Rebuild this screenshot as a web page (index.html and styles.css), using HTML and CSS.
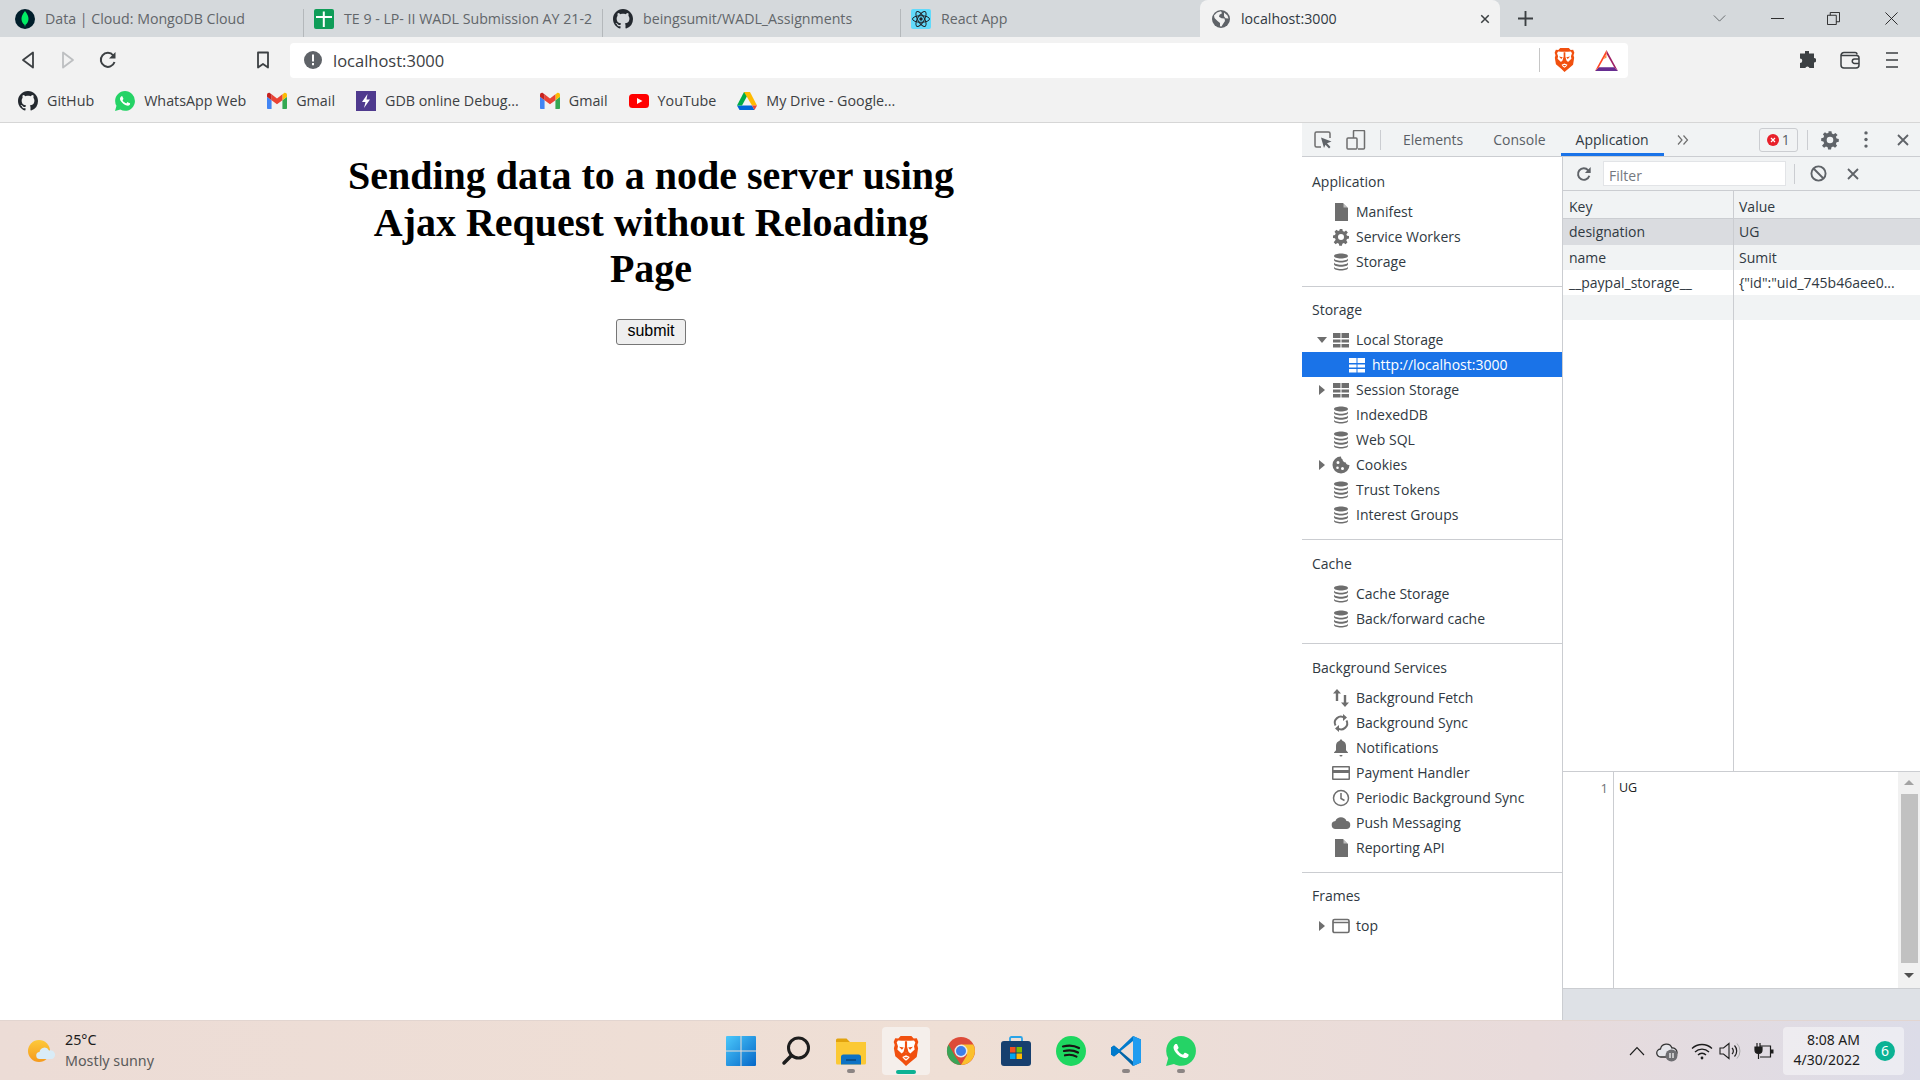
FILE: index.html
```html
<!DOCTYPE html>
<html lang="en">
<head>
  <meta charset="UTF-8">
  <title>localhost:3000</title>
  <link rel="stylesheet" href="styles.css">
</head>
<body>
  <svg class="defs" width="0" height="0">
    <symbol id="i-github" viewBox="0 0 16 16"><path fill="#24292f" d="M8 0C3.58 0 0 3.58 0 8c0 3.54 2.29 6.53 5.47 7.59.4.07.55-.17.55-.38 0-.19-.01-.82-.01-1.49-2.01.37-2.53-.49-2.69-.94-.09-.23-.48-.94-.82-1.13-.28-.15-.68-.52-.01-.53.63-.01 1.08.58 1.23.82.72 1.21 1.87.87 2.33.66.07-.52.28-.87.51-1.07-1.78-.2-3.64-.89-3.64-3.95 0-.87.31-1.59.82-2.15-.08-.2-.36-1.02.08-2.12 0 0 .67-.21 2.2.82.64-.18 1.32-.27 2-.27.68 0 1.36.09 2 .27 1.53-1.04 2.2-.82 2.2-.82.44 1.1.16 1.92.08 2.12.51.56.82 1.27.82 2.15 0 3.07-1.87 3.75-3.65 3.95.29.25.54.73.54 1.48 0 1.07-.01 1.93-.01 2.2 0 .21.15.46.55.38A8.013 8.013 0 0016 8c0-4.42-3.58-8-8-8z"/></symbol>
    <symbol id="i-whatsapp" viewBox="0 0 24 24"><path fill="#25d366" d="M.06 24l1.69-6.16A11.86 11.86 0 0 1 .16 11.9C.16 5.34 5.5 0 12.05 0c3.18 0 6.17 1.24 8.41 3.49a11.82 11.82 0 0 1 3.48 8.41c0 6.56-5.34 11.89-11.89 11.89-2 0-3.95-.5-5.68-1.45z"/><path fill="#fff" d="M17.47 14.38c-.3-.15-1.76-.87-2.03-.97-.27-.1-.47-.15-.67.15-.2.3-.77.97-.94 1.16-.17.2-.35.22-.64.08-.3-.15-1.26-.46-2.39-1.48-.88-.79-1.48-1.76-1.65-2.06-.17-.3-.02-.46.13-.61.13-.13.3-.35.45-.52.15-.17.2-.3.3-.5.1-.2.05-.37-.03-.52-.07-.15-.67-1.61-.92-2.21-.24-.58-.49-.5-.67-.51h-.57c-.2 0-.52.07-.79.37-.27.3-1.04 1.02-1.04 2.48 0 1.46 1.07 2.88 1.21 3.07.15.2 2.1 3.2 5.08 4.49.71.31 1.26.49 1.69.63.71.23 1.36.2 1.87.12.57-.09 1.76-.72 2.01-1.41.25-.69.25-1.29.17-1.41-.07-.12-.27-.2-.57-.35z"/></symbol>
    <symbol id="i-gmail" viewBox="0 0 24 20"><path fill="#4285f4" d="M1 19.5h4.5V9L0 5v13c0 .8.5 1.5 1 1.5z"/><path fill="#34a853" d="M18.5 19.5H23c.6 0 1-.7 1-1.5V5l-5.5 4z"/><path fill="#fbbc04" d="M18.5 2v7L24 5V2.5C24 .6 21.8-.5 20.3.6z"/><path fill="#ea4335" d="M5.5 9V2L12 7l6.5-5v7L12 14z"/><path fill="#c5221f" d="M0 2.5V5l5.500 4V2L3.700.6C2.200-.5 0 .6 0 2.500z"/></symbol>
    <symbol id="i-brave" viewBox="0 0 24 28"><path fill="#f1500f" d="M7 0h10l2.2 2.3 2.9-.3 1.4 3.5-1 3 .8 3-1.300 8-6.500 5.500L12 28l-3.500-3.500L2 19l-1.300-7.500.8-3-1-3L1.900 2l2.900.3z"/><path fill="#fff" d="M8 4.500h8l3.500-.3 1.200 1.800-1.200 3.500.6 3-4 3.800-1.100-1-1.500-.8-1.500.8-1.500-.8-1.500.8-1.100 1-4-3.800.6-3L3.300 6l1.200-1.800zM8.500 19.500L12 18l3.500 1.500-1.500 2-2 1.500-2-1.500z"/><path fill="#f1500f" d="M5.500 10l4.500.8-1.800 2zM18.500 10l-4.500.8 1.800 2zM11 5v5l-1.500 5.500h5L13 10V5zM9.800 19.800h4.400L12 21.500z"/></symbol>
    <symbol id="i-db" viewBox="0 0 20 20"><path fill="#6e6e6e" d="M10 1.500c3.900 0 7 1.100 7 2.500s-3.100 2.500-7 2.500S3 5.400 3 4s3.100-2.500 7-2.500zM3 6.200c0 1.400 3.100 2.500 7 2.500s7-1.100 7-2.500v1.900c0 1.400-3.100 2.500-7 2.500s-7-1.100-7-2.500zM3 10.300c0 1.400 3.100 2.500 7 2.500s7-1.100 7-2.500v1.900c0 1.400-3.100 2.500-7 2.500s-7-1.100-7-2.500zM3 14.400c0 1.400 3.100 2.500 7 2.500s7-1.100 7-2.500V16c0 1.400-3.100 2.500-7 2.500S3 17.400 3 16z"/></symbol>
    <symbol id="i-grid" viewBox="0 0 20 20"><path fill="currentColor" d="M2 3h7.500v5H2zM10.500 3H18v5h-7.500zM2 9.500h7.500v3H2zM10.500 9.500H18v3h-7.500zM2 14h7.500v3.500H2zM10.500 14H18v3.500h-7.500z"/></symbol>
    <symbol id="i-file" viewBox="0 0 20 20"><path fill="#6e6e6e" d="M4 1h8l5 5v13H4z"/><path fill="#fff" d="M12.500 1.500l4 4h-4z" opacity=".55"/></symbol>
    <symbol id="i-gear" viewBox="-3 -3 30 30"><path fill="currentColor" fill-rule="evenodd" d="M10 0h4l.6 3 2.300 1 2.600-1.700 2.800 2.800L20 7.700l1 2.300 3 .6v3.800l-3 .6-1 2.300 1.700 2.600-2.800 2.800-2.600-1.700-2.300 1-.6 3h-4l-.6-3-2.300-1-2.600 1.700-2.800-2.800L4 16.300 3 14l-3-.6V9.600l3-.6 1-2.300-1.700-2.600 2.800-2.800 2.600 1.700 2.300-1zM12 7.500a4.500 4.500 0 1 0 0 9 4.500 4.500 0 0 0 0-9z"/></symbol>
  </svg>

  <div class="tabstrip">
    <div class="tab tab-first">
      <svg class="favicon" viewBox="0 0 20 20"><circle cx="10" cy="10" r="10" fill="#001e2b"/><path fill="#00ed64" d="M10 2c2.500 3 3.500 5.500 3.500 8 0 3-1.800 5-3 5.800L10 18l-.5-2.200c-1.200-.8-3-2.800-3-5.800 0-2.500 1-5 3.500-8z"/></svg>
      <span class="tab-title">Data | Cloud: MongoDB Cloud</span>
    </div>
    <div class="tab">
      <svg class="favicon" viewBox="0 0 20 20"><rect width="20" height="20" rx="2" fill="#0f9d58"/><path fill="#fff" d="M8.800 2.500h2v4.500H18v2h-7.200v9h-2v-9H2v-2h6.800z"/></svg>
      <span class="tab-title">TE 9 - LP- II WADL Submission AY 21-2</span>
    </div>
    <div class="tab">
      <svg class="favicon"><use href="#i-github"/></svg>
      <span class="tab-title">beingsumit/WADL_Assignments</span>
    </div>
    <div class="tab tab-last">
      <svg class="favicon" viewBox="0 0 20 20"><rect width="20" height="20" rx="2" fill="#61dafb"/><g fill="none" stroke="#20232a" stroke-width="1"><ellipse cx="10" cy="10" rx="8.500" ry="3.300"/><ellipse cx="10" cy="10" rx="8.500" ry="3.300" transform="rotate(60 10 10)"/><ellipse cx="10" cy="10" rx="8.500" ry="3.300" transform="rotate(120 10 10)"/></g><circle cx="10" cy="10" r="1.700" fill="#20232a"/></svg>
      <span class="tab-title">React App</span>
    </div>
    <div class="tab tab-active">
      <svg class="favicon" viewBox="0 0 20 20"><circle cx="10" cy="10" r="9" fill="#5f6368"/><path fill="#f2f2f2" d="M3 6.500l3-3 4-1.200 1 2-2.500 1.500-.5 2 2.500 1.500 3 .2.500 2.500-2 3-1.500 2.500-1.500-.2V14L6.500 12 3.500 9zM13 3.500l3.500 3 1 3-3-.2-1.500-2z"/></svg>
      <span class="tab-title">localhost:3000</span>
      <svg class="tab-close" viewBox="0 0 12 12"><path d="M1.500 1.500l9 9M10.500 1.500l-9 9" stroke="#3c4043" stroke-width="1.800"/></svg>
    </div>
    <svg class="tab-new" viewBox="0 0 16 16"><path d="M8 0v16M0 8h16" stroke="#3c4043" stroke-width="2"/></svg>
    <div class="window-btns">
      <svg class="win-chevron" viewBox="0 0 14 8"><path d="M.5.500L7 7l6.500-6.500" fill="none" stroke="#3c4043" stroke-width=".8"/></svg>
      <svg class="win-min" viewBox="0 0 14 14"><path d="M0 7h14" stroke="#222" stroke-width="1"/></svg>
      <svg class="win-restore" viewBox="0 0 14 14"><path d="M.5 3.500h9.500v10H.5zM3.500 3.500v-3h10v10H10" fill="none" stroke="#222"/></svg>
      <svg class="win-close" viewBox="0 0 14 14"><path d="M.5.500l13 13M13.500.500l-13 13" stroke="#222"/></svg>
    </div>
  </div>

  <div class="toolbar">
    <svg class="tool-back" viewBox="0 0 14 18"><path d="M12 1.500v15L2 9z" fill="none" stroke="#3c4043" stroke-width="1.800" stroke-linejoin="round"/></svg>
    <svg class="tool-forward" viewBox="0 0 14 18"><path d="M2 1.500v15L12 9z" fill="none" stroke="#bdbfc1" stroke-width="1.800" stroke-linejoin="round"/></svg>
    <svg class="tool-reload" viewBox="0 0 18 18"><path d="M15.500 11a7 7 0 1 1-1.200-6.500" fill="none" stroke="#3c4043" stroke-width="2"/><path fill="#3c4043" d="M16.500 1v6.500H10z"/></svg>
    <svg class="tool-bookmark" viewBox="0 0 14 18"><path d="M2 1.500h10v15l-5-3.500-5 3.500z" fill="none" stroke="#3c4043" stroke-width="1.800" stroke-linejoin="round"/></svg>
    <div class="omnibox">
      <svg class="omni-info" viewBox="0 0 18 18"><circle cx="9" cy="9" r="9" fill="#5f6368"/><path d="M8 3.500h2v7H8zM8 12h2v2.200H8z" fill="#fff"/></svg>
      <span class="omni-url">localhost:3000</span>
      <span class="omni-sep"></span>
      <svg class="omni-brave"><use href="#i-brave"/></svg>
      <svg class="omni-bat" viewBox="0 0 24 22"><path fill="#662d91" d="M0 22h24l-4-4H4z"/><path fill="#9e1f63" d="M12 0l12 22-4-4L12 4z"/><path fill="#ff4724" d="M12 0L0 22l4-4L12 4z"/><path fill="#ff8a3c" d="M12 4L9 9.500l3-1.500z"/></svg>
    </div>
    <svg class="tool-puzzle" viewBox="0 0 18 18"><path fill="#3c4043" d="M7 0a2.200 2.200 0 0 1 4 0v2.500h5v4.500a2.200 2.200 0 0 1 0 4.500V17h-4.500a2.200 2.200 0 0 0-4.200 0H2v-5a2.200 2.200 0 0 0 0-4.500V2.500h5z"/></svg>
    <svg class="tool-wallet" viewBox="0 0 20 18"><path d="M1 4.500A3 3 0 0 1 4 1.500h11a2 2 0 0 1 2 2M1 4.500V14a3 3 0 0 0 3 3h12a3 3 0 0 0 3-3V7a2.500 2.500 0 0 0-2.500-2.500zM19 8h-4.500a2 2 0 0 0 0 4.500H19" fill="none" stroke="#3c4043" stroke-width="1.500"/></svg>
    <svg class="tool-menu" viewBox="0 0 12 18"><path d="M0 2h12M0 9h12M0 16h12" stroke="#3c4043" stroke-width="1.600"/></svg>
  </div>

  <div class="bookmarks">
    <div class="bookmark"><svg class="bm-icon"><use href="#i-github"/></svg><span>GitHub</span></div>
    <div class="bookmark"><svg class="bm-icon"><use href="#i-whatsapp"/></svg><span>WhatsApp Web</span></div>
    <div class="bookmark"><svg class="bm-icon"><use href="#i-gmail"/></svg><span>Gmail</span></div>
    <div class="bookmark"><svg class="bm-icon" viewBox="0 0 20 20"><rect width="20" height="20" fill="#4f3a8e"/><path fill="#fff" d="M11.500 3L6 11h3.500L8 17l6-8.500h-3.500z"/></svg><span>GDB online Debug...</span></div>
    <div class="bookmark"><svg class="bm-icon"><use href="#i-gmail"/></svg><span>Gmail</span></div>
    <div class="bookmark"><svg class="bm-icon" viewBox="0 0 20 14"><rect width="20" height="14" rx="3.500" fill="#f00"/><path fill="#fff" d="M8 4l5.500 3L8 10z"/></svg><span>YouTube</span></div>
    <div class="bookmark"><svg class="bm-icon" viewBox="0 0 20 18"><path fill="#0066da" d="M0 13.500L2.500 18h15l-2.500-4.500z"/><path fill="#00ac47" d="M7 0L0 13.500h5L12 .5z"/><path fill="#ffba00" d="M7 0h6l7 13.500h-5z"/><path fill="#ea4335" d="M15 13.500h5L17.500 18z"/></svg><span>My Drive - Google...</span></div>
  </div>

  <div class="browser-main">
    <main class="page">
      <h1 class="page-title">Sending data to a node server using Ajax Request without Reloading Page</h1>
      <button class="page-btn" type="button">submit</button>
    </main>

    <section class="devtools">
      <div class="dt-header">
        <svg class="dt-inspect" viewBox="0 0 18 18"><path d="M7 16H2.500A1.500 1.500 0 0 1 1 14.500v-12A1.500 1.500 0 0 1 2.500 1h12A1.500 1.500 0 0 1 16 2.500V7" fill="none" stroke="#6e6e6e" stroke-width="1.500"/><path fill="#5f6368" d="M7 6.500l10.500 4-4.500 1.700 3.500 3.800-1.500 1.500-3.500-3.800L10 17z"/></svg>
        <svg class="dt-device" viewBox="0 0 20 20"><path d="M7.500 8V1.500a1 1 0 0 1 1-1h9a1 1 0 0 1 1 1V18a1 1 0 0 1-1 1h-5.500" fill="none" stroke="#6e6e6e" stroke-width="1.500"/><rect x="1" y="8" width="10" height="11" rx="1" fill="none" stroke="#6e6e6e" stroke-width="1.500"/></svg>
        <span class="dt-sep"></span>
        <span class="dt-tab">Elements</span>
        <span class="dt-tab">Console</span>
        <span class="dt-tab dt-tab-active">Application</span>
        <svg class="dt-more" viewBox="0 0 12 10"><path d="M1 .5L5 5 1 9.500M6.500.5l4 4.500-4 4.500" fill="none" stroke="#6e6e6e" stroke-width="1.200"/></svg>
        <div class="dt-errors">
          <svg class="dt-err-icon" viewBox="0 0 12 12"><circle cx="6" cy="6" r="6" fill="#e8202a"/><path d="M4 4l4 4M8 4L4 8" stroke="#fff" stroke-width="1.200"/></svg>
          <span>1</span>
        </div>
        <span class="dt-sep dt-sep-right"></span>
        <svg class="dt-gear"><use href="#i-gear"/></svg>
        <svg class="dt-dots" viewBox="0 0 4 18"><circle cx="2" cy="2" r="1.800" fill="#5f6368"/><circle cx="2" cy="9" r="1.800" fill="#5f6368"/><circle cx="2" cy="16" r="1.800" fill="#5f6368"/></svg>
        <svg class="dt-close" viewBox="0 0 12 12"><path d="M1 1l10 10M11 1L1 11" stroke="#5f6368" stroke-width="1.800"/></svg>
      </div>

      <div class="dt-body">
        <aside class="sidebar">
          <div class="side-group">
            <div class="side-title">Application</div>
            <div class="tree-row"><span class="tree-arrow"></span><svg class="tree-icon"><use href="#i-file"/></svg><span>Manifest</span></div>
            <div class="tree-row"><span class="tree-arrow"></span><svg class="tree-icon tree-gear"><use href="#i-gear"/></svg><span>Service Workers</span></div>
            <div class="tree-row"><span class="tree-arrow"></span><svg class="tree-icon"><use href="#i-db"/></svg><span>Storage</span></div>
          </div>

          <div class="side-group">
            <div class="side-title">Storage</div>
            <div class="tree-row"><span class="tree-arrow arrow-down"></span><svg class="tree-icon"><use href="#i-grid"/></svg><span>Local Storage</span></div>
            <div class="tree-row tree-child tree-selected"><span class="tree-arrow"></span><svg class="tree-icon"><use href="#i-grid"/></svg><span>http://localhost:3000</span></div>
            <div class="tree-row"><span class="tree-arrow arrow-right"></span><svg class="tree-icon"><use href="#i-grid"/></svg><span>Session Storage</span></div>
            <div class="tree-row"><span class="tree-arrow"></span><svg class="tree-icon"><use href="#i-db"/></svg><span>IndexedDB</span></div>
            <div class="tree-row"><span class="tree-arrow"></span><svg class="tree-icon"><use href="#i-db"/></svg><span>Web SQL</span></div>
            <div class="tree-row"><span class="tree-arrow arrow-right"></span><svg class="tree-icon" viewBox="0 0 20 20"><path fill="#6e6e6e" fill-rule="evenodd" d="M10 1.500a8.500 8.500 0 1 0 8.500 8.500c-2 .3-3.500-1-3.700-2.500-1.800 0-3.300-1.300-3.300-3.200-1-.3-1.500-1.500-1.500-2.800zM7 6a1.500 1.500 0 1 1 0 3 1.500 1.500 0 0 1 0-3zm-.5 5.500a1.300 1.300 0 1 1 0 2.600 1.300 1.300 0 0 1 0-2.600zm5 .5a1.500 1.500 0 1 1 0 3 1.500 1.500 0 0 1 0-3z"/></svg><span>Cookies</span></div>
            <div class="tree-row"><span class="tree-arrow"></span><svg class="tree-icon"><use href="#i-db"/></svg><span>Trust Tokens</span></div>
            <div class="tree-row"><span class="tree-arrow"></span><svg class="tree-icon"><use href="#i-db"/></svg><span>Interest Groups</span></div>
          </div>

          <div class="side-group side-group-low">
            <div class="side-title">Cache</div>
            <div class="tree-row"><span class="tree-arrow"></span><svg class="tree-icon"><use href="#i-db"/></svg><span>Cache Storage</span></div>
            <div class="tree-row"><span class="tree-arrow"></span><svg class="tree-icon"><use href="#i-db"/></svg><span>Back/forward cache</span></div>
          </div>

          <div class="side-group side-group-low">
            <div class="side-title">Background Services</div>
            <div class="tree-row"><span class="tree-arrow"></span><svg class="tree-icon" viewBox="0 0 20 20"><path fill="#6e6e6e" d="M6 1l4 4.500H7.200V13H4.800V5.500H2zM14 19l-4-4.500h2.800V7h2.400v7.500H18z"/></svg><span>Background Fetch</span></div>
            <div class="tree-row"><span class="tree-arrow"></span><svg class="tree-icon" viewBox="0 0 20 20"><path d="M4.500 12.500A6 6 0 0 1 13.500 5M15.500 7.500A6 6 0 0 1 6.500 15" fill="none" stroke="#6e6e6e" stroke-width="2"/><path fill="#6e6e6e" d="M12 1v7l4-3.500zM8 19v-7l-4 3.500z"/></svg><span>Background Sync</span></div>
            <div class="tree-row"><span class="tree-arrow"></span><svg class="tree-icon" viewBox="0 0 20 20"><path fill="#6e6e6e" d="M10 1.500c.8 0 1.300.5 1.300 1.200 2.300.6 3.700 2.500 3.700 5v4.500l2 2.300v.5H3v-.5l2-2.300V7.700c0-2.500 1.400-4.400 3.700-5 0-.7.5-1.200 1.300-1.200zM8.500 17h3a1.500 1.500 0 0 1-3 0z"/></svg><span>Notifications</span></div>
            <div class="tree-row"><span class="tree-arrow"></span><svg class="tree-icon" viewBox="0 0 20 20"><path fill="#6e6e6e" fill-rule="evenodd" d="M2 3h16a1 1 0 0 1 1 1v12a1 1 0 0 1-1 1H2a1 1 0 0 1-1-1V4a1 1 0 0 1 1-1zm.500 1.500v2.500h15V4.500zm0 5.500v5.500h15V10z"/></svg><span>Payment Handler</span></div>
            <div class="tree-row"><span class="tree-arrow"></span><svg class="tree-icon" viewBox="0 0 20 20"><circle cx="10" cy="10" r="7.500" fill="none" stroke="#6e6e6e" stroke-width="1.500"/><path d="M10 5v5.500l3.500 2" fill="none" stroke="#6e6e6e" stroke-width="1.500"/></svg><span>Periodic Background Sync</span></div>
            <div class="tree-row"><span class="tree-arrow"></span><svg class="tree-icon" viewBox="0 0 20 20"><path fill="#6e6e6e" d="M5 16a4 4 0 0 1-.6-8A6 6 0 0 1 15.500 8 4 4 0 0 1 15 16z"/></svg><span>Push Messaging</span></div>
            <div class="tree-row"><span class="tree-arrow"></span><svg class="tree-icon"><use href="#i-file"/></svg><span>Reporting API</span></div>
          </div>

          <div class="side-group side-group-last">
            <div class="side-title">Frames</div>
            <div class="tree-row"><span class="tree-arrow arrow-right"></span><svg class="tree-icon" viewBox="0 0 20 20"><rect x="2" y="3.500" width="16" height="13" rx="1.500" fill="none" stroke="#6e6e6e" stroke-width="1.700"/><path d="M2 6.500h16" stroke="#6e6e6e" stroke-width="1.500"/></svg><span>top</span></div>
          </div>
        </aside>

        <div class="storage-pane">
          <div class="storage-toolbar">
            <svg class="st-reload" viewBox="0 0 18 18"><path d="M15 11a6.500 6.500 0 1 1-1.300-6.200" fill="none" stroke="#5f6368" stroke-width="2.200"/><path fill="#5f6368" d="M16.500 1v7H10z"/></svg>
            <div class="st-filter">Filter</div>
            <span class="st-sep"></span>
            <svg class="st-block" viewBox="0 0 18 18"><circle cx="9" cy="9" r="7.500" fill="none" stroke="#5f6368" stroke-width="2"/><path d="M4 4l10 10" stroke="#5f6368" stroke-width="2"/></svg>
            <svg class="st-clear" viewBox="0 0 12 12"><path d="M1 1l10 10M11 1L1 11" stroke="#5f6368" stroke-width="1.800"/></svg>
          </div>
          <div class="kv-table">
            <div class="kv-row kv-head"><div class="kv-key">Key</div><div class="kv-val">Value</div></div>
            <div class="kv-row kv-picked"><div class="kv-key">designation</div><div class="kv-val">UG</div></div>
            <div class="kv-row kv-alt"><div class="kv-key">name</div><div class="kv-val">Sumit</div></div>
            <div class="kv-row"><div class="kv-key">__paypal_storage__</div><div class="kv-val">{"id":"uid_745b46aee0...</div></div>
            <div class="kv-row kv-alt"><div class="kv-key"></div><div class="kv-val"></div></div>
            <div class="kv-row kv-filler"><div class="kv-key"></div><div class="kv-val"></div></div>
          </div>
          <div class="viewer">
            <div class="viewer-gutter">1</div>
            <div class="viewer-code">UG</div>
            <div class="viewer-scroll">
              <span class="scroll-up"></span>
              <span class="scroll-thumb"></span>
              <span class="scroll-down"></span>
            </div>
          </div>
          <div class="status-bar"></div>
        </div>
      </div>
    </section>
  </div>

  <footer class="taskbar">
    <div class="weather">
      <svg class="weather-icon" viewBox="0 0 28 24"><defs><linearGradient id="sun" x1="0" y1="0" x2="0" y2="1"><stop offset="0" stop-color="#fdc93a"/><stop offset="1" stop-color="#f59a1c"/></linearGradient></defs><circle cx="12" cy="12" r="11" fill="url(#sun)"/><path fill="#d9ecf7" d="M13 20a3.500 3.500 0 0 1-.5-7 5 5 0 0 1 9.500-1.500 4.300 4.300 0 0 1 3 8.500z"/></svg>
      <div class="weather-text">
        <div class="weather-temp">25°C</div>
        <div class="weather-desc">Mostly sunny</div>
      </div>
    </div>

    <div class="task-apps">
      <div class="task-app">
        <svg class="task-icon" viewBox="0 0 30 30"><defs><linearGradient id="win" x1="0" y1="0" x2="1" y2="1"><stop offset="0" stop-color="#4bc8fb"/><stop offset="1" stop-color="#0567c8"/></linearGradient></defs><path fill="url(#win)" fill-rule="evenodd" d="M0 1a1 1 0 0 1 1-1h13.500v14.500H0zM15.500 0H29a1 1 0 0 1 1 1v13.500H15.500zM0 15.500h14.500V30H1a1 1 0 0 1-1-1zM15.500 15.500H30V29a1 1 0 0 1-1 1H15.500z"/></svg>
      </div>
      <div class="task-app">
        <svg class="task-icon" viewBox="0 0 30 30"><circle cx="17.500" cy="12" r="10" fill="none" stroke="#1d1d1d" stroke-width="3"/><path d="M10.500 19.500L3 27" stroke="#1d1d1d" stroke-width="3.500" stroke-linecap="round"/></svg>
      </div>
      <div class="task-app task-running">
        <svg class="task-icon" viewBox="0 0 30 30"><path fill="#e2a30d" d="M0 4a1.500 1.500 0 0 1 1.500-1.500h9L14 6h16v4H0z"/><path fill="#fbc935" d="M0 6h30v21a1.500 1.500 0 0 1-1.500 1.500h-27A1.500 1.500 0 0 1 0 27z"/><path fill="#0d72c4" d="M5 21a2.500 2.500 0 0 1 2.500-2.500h15A2.500 2.500 0 0 1 25 21v7.500H5z"/><path d="M10 24h10" stroke="#062f57" stroke-width="1"/></svg>
      </div>
      <div class="task-app task-active">
        <svg class="task-icon"><use href="#i-brave"/></svg>
      </div>
      <div class="task-app">
        <svg class="task-icon" viewBox="0 0 30 30"><circle cx="15" cy="15" r="14" fill="#dd4b39"/><path fill="#3aa457" d="M2.500 8.500L9 20l6 9A14 14 0 0 1 2.500 8.500z"/><path fill="#fbc02d" d="M15 8.500h12.300A14 14 0 0 1 15 29l6-10z"/><path fill="#e8e8e8" d="M15 8.500a6.500 6.500 0 1 1 0 13 6.500 6.500 0 0 1 0-13z"/><circle cx="15" cy="15" r="5" fill="#3f7fe8"/></svg>
      </div>
      <div class="task-app">
        <svg class="task-icon" viewBox="0 0 30 30"><path d="M9 6V2.500A1.500 1.500 0 0 1 10.500 1h9A1.500 1.500 0 0 1 21 2.500V6" fill="none" stroke="#2aa4e8" stroke-width="1.800"/><rect y="5" width="30" height="25" rx="3" fill="#17406f"/><rect x="9" y="11" width="5.500" height="5.500" fill="#f25022"/><rect x="15.500" y="11" width="5.500" height="5.500" fill="#7fba00"/><rect x="9" y="17.500" width="5.500" height="5.500" fill="#00a4ef"/><rect x="15.500" y="17.500" width="5.500" height="5.500" fill="#ffb900"/></svg>
      </div>
      <div class="task-app">
        <svg class="task-icon" viewBox="0 0 30 30"><circle cx="15" cy="15" r="15" fill="#1ed760"/><path d="M7 10.500c5.500-1.500 11.500-1 16 1.500M8 15c5-1.200 10-.7 14 1.500M9 19.300c4-1 8-.6 11.500 1.300" fill="none" stroke="#191414" stroke-width="2.200" stroke-linecap="round"/></svg>
      </div>
      <div class="task-app task-running">
        <svg class="task-icon" viewBox="0 0 30 30"><path fill="#0065a9" d="M22 0l8 3.500v23L22 30 8 16.500 3 20.500l-3-2v-7l3-2 19 16z"/><path fill="#007acc" d="M0 18.500l3 2L22 5v-5L8 13.500 3 9.500l-3 2v7z"/><path fill="#1f9cf0" d="M22 0l8 3.500v23L22 30z"/></svg>
      </div>
      <div class="task-app task-running">
        <svg class="task-icon"><use href="#i-whatsapp"/></svg>
      </div>
    </div>

    <div class="tray">
      <svg class="tray-icon tray-chevron" viewBox="0 0 16 10"><path d="M1 9l7-7.500L15 9" fill="none" stroke="#1d1d1d" stroke-width="1.100"/></svg>
      <svg class="tray-icon tray-cloud" viewBox="0 0 22 22"><path d="M5 17a4 4 0 0 1-.5-8A6 6 0 0 1 16 8a4.500 4.500 0 0 1 1 9z" fill="#e5e5ea" stroke="#333" stroke-width="1.300"/><circle cx="15.500" cy="15.500" r="6" fill="#6e6e72"/><path d="M14 13v5M17 13v5" stroke="#fff" stroke-width="1.200"/></svg>
      <svg class="tray-icon tray-wifi" viewBox="0 0 22 18"><path d="M1 6.500a14.500 14.500 0 0 1 20 0M4 10a10 10 0 0 1 14 0M7 13a5.500 5.500 0 0 1 8 0" fill="none" stroke="#1d1d1d" stroke-width="1.300"/><circle cx="11" cy="16" r="1.400" fill="#1d1d1d"/></svg>
      <svg class="tray-icon tray-volume" viewBox="0 0 22 18"><path d="M1 6h3.500L10 1.500v15L4.500 12H1z" fill="none" stroke="#1d1d1d" stroke-width="1.100"/><path d="M13 6a4 4 0 0 1 0 6M15.500 3.500a8 8 0 0 1 0 11" fill="none" stroke="#1d1d1d" stroke-width="1.200"/><path d="M18 1.500a11 11 0 0 1 0 15" fill="none" stroke="#aaa" stroke-width="1"/></svg>
      <svg class="tray-icon tray-battery" viewBox="0 0 22 18"><path d="M5 1v4M8 1v4M3 5h7v3a3.500 3.500 0 0 1-7 0zM6.500 11v6" stroke="#1d1d1d" fill="#1d1d1d" stroke-width="1.200"/><path d="M8 4h10.500v11H8" fill="none" stroke="#1d1d1d" stroke-width="1.200"/><path d="M19 7.500h2.500v4H19z" fill="#1d1d1d"/></svg>
      <div class="clock">
        <div class="clock-text">
          <div>8:08 AM</div>
          <div>4/30/2022</div>
        </div>
        <span class="notif-badge">6</span>
      </div>
    </div>
  </footer>
</body>
</html>
```

FILE: styles.css
```css
html, body {
  margin: 0;
  padding: 0;
}

body {
  width: 1920px;
  height: 1080px;
  overflow: hidden;
  display: flex;
  flex-direction: column;
  font-family: "Open Sans", "Noto Sans", sans-serif;
  background: #fff;
  color: #303942;
}

svg {
  display: block;
  flex-shrink: 0;
}

.defs {
  position: absolute;
}

/* browser chrome */
.tabstrip {
  height: 37px;
  flex-shrink: 0;
  display: flex;
  align-items: stretch;
  background: #d5d9dc;
  font-size: 14.2px;
}

.tab {
  width: 299px;
  display: flex;
  align-items: center;
  gap: 10px;
  padding-left: 10px;
  padding-right: 2px;
  box-sizing: border-box;
  color: #62666a;
  position: relative;
}

.tab-first {
  width: 304px;
  padding-left: 15px;
}

.tab:nth-child(3) {
  width: 298px;
}

.tab::after {
  content: "";
  position: absolute;
  right: 0;
  top: 9px;
  bottom: 0;
  width: 1px;
  background: #b4b8bb;
}

.tab-last::after,
.tab-active::after {
  display: none;
}

.tab-title {
  white-space: nowrap;
  flex: 1;
}

.favicon {
  width: 20px;
  height: 20px;
}

.tab-active {
  width: 300px;
  padding-left: 11px;
  padding-right: 6px;
  background: #f2f2f2;
  color: #303942;
  border-radius: 8px 8px 0 0;
}

.tab-close {
  width: 10px;
  height: 10px;
  margin-right: 4px;
}

.tab-new {
  width: 15px;
  height: 15px;
  margin: 11px 0 0 18px;
}

.window-btns {
  margin-left: auto;
  display: flex;
  align-items: center;
}

.win-chevron {
  width: 13px;
  height: 7px;
  margin-right: 45px;
}

.win-min {
  width: 13px;
  height: 13px;
  margin-right: 43px;
}

.win-restore {
  width: 13px;
  height: 13px;
  margin-right: 45px;
}

.win-close {
  width: 13px;
  height: 13px;
  margin-right: 22px;
}

.toolbar {
  height: 46px;
  flex-shrink: 0;
  display: flex;
  align-items: center;
  background: #f2f2f2;
  box-sizing: border-box;
}

.tool-back {
  width: 14px;
  height: 18px;
  margin-left: 21px;
}

.tool-forward {
  width: 14px;
  height: 18px;
  margin-left: 26px;
}

.tool-reload {
  width: 18px;
  height: 18px;
  margin-left: 24px;
}

.tool-bookmark {
  width: 14px;
  height: 18px;
  margin-left: 139px;
}

.omnibox {
  width: 1338px;
  height: 35px;
  margin-left: 20px;
  background: #fff;
  border-radius: 4px;
  display: flex;
  align-items: center;
  padding-left: 14px;
  box-sizing: border-box;
}

.omni-info {
  width: 18px;
  height: 18px;
}

.omni-url {
  font-size: 16.5px;
  color: #3c4043;
  margin-left: 11px;
  width: 1195px;
}

.omni-sep {
  width: 1px;
  height: 24px;
  background: #c6c6c6;
  margin-left: 11px;
}

.omni-brave {
  width: 21px;
  height: 24px;
  margin-left: 14px;
}

.omni-bat {
  width: 23px;
  height: 21px;
  margin-left: 20px;
}

.tool-puzzle {
  width: 18px;
  height: 18px;
  margin-left: 170px;
}

.tool-wallet {
  width: 20px;
  height: 18px;
  margin-left: 24px;
}

.tool-menu {
  width: 12px;
  height: 18px;
  margin-left: 26px;
}

.bookmarks {
  height: 40px;
  flex-shrink: 0;
  box-sizing: border-box;
  display: flex;
  align-items: center;
  gap: 21px;
  padding: 0 0 4px 18px;
  background: #f2f2f2;
  border-bottom: 1px solid #d6d6d6;
  font-size: 14.3px;
  color: #3c4043;
}

.bookmark {
  display: flex;
  align-items: center;
  gap: 9px;
}

.bm-icon {
  width: 20px;
  height: 20px;
}

.browser-main {
  height: 897px;
  flex-shrink: 0;
  display: flex;
}

/* the page itself */
.page {
  width: 1302px;
  flex-shrink: 0;
  display: flex;
  flex-direction: column;
  align-items: center;
  background: #fff;
}

.page-title {
  width: 640px;
  margin: 30px 0 26px;
  font-family: "Liberation Serif", serif;
  font-size: 40px;
  font-weight: bold;
  line-height: 46.5px;
  text-align: center;
  color: #000;
}

.page-btn {
  width: 70px;
  height: 26px;
  padding: 0 0 2px;
  font-family: "Liberation Sans", sans-serif;
  font-size: 16px;
  color: #000;
  background: #efefef;
  border: 1px solid #767676;
  border-radius: 3px;
}

/* devtools */
.devtools {
  flex: 1;
  display: flex;
  flex-direction: column;
  font-size: 14px;
  min-width: 0;
}

.dt-header {
  height: 34px;
  flex-shrink: 0;
  box-sizing: border-box;
  display: flex;
  align-items: center;
  background: #f1f3f4;
  border-bottom: 1px solid #cbcdd1;
  color: #5a5f66;
}

.dt-inspect {
  width: 18px;
  height: 18px;
  margin-left: 12px;
}

.dt-device {
  width: 20px;
  height: 20px;
  margin-left: 14px;
}

.dt-sep {
  width: 1px;
  height: 20px;
  background: #cbcdd1;
  margin-left: 14px;
}

.dt-tab {
  height: 100%;
  display: flex;
  align-items: center;
  padding: 0 15px;
  box-sizing: border-box;
}

.dt-sep + .dt-tab {
  margin-left: 7px;
}

.dt-tab-active {
  color: #303942;
  border-bottom: 3px solid #1a73e8;
  padding-top: 3px;
}

.dt-more {
  width: 12px;
  height: 10px;
  margin-left: 13px;
}

.dt-errors {
  width: 39px;
  height: 24px;
  margin-left: 70px;
  box-sizing: border-box;
  border: 1px solid #cbcdd1;
  border-radius: 3px;
  display: flex;
  align-items: center;
  justify-content: center;
  gap: 3px;
}

.dt-err-icon {
  width: 12px;
  height: 12px;
}

.dt-sep-right {
  margin-left: 9px;
}

.dt-gear {
  width: 22px;
  height: 22px;
  margin-left: 11px;
  color: #5f6368;
}

.dt-dots {
  width: 4px;
  height: 17px;
  margin-left: 23px;
}

.dt-close {
  width: 12px;
  height: 12px;
  margin-left: 29px;
}

.dt-body {
  flex: 1;
  display: flex;
  min-height: 0;
}

.sidebar {
  width: 261px;
  flex-shrink: 0;
  box-sizing: border-box;
  border-right: 1px solid #cbcdd1;
  padding-top: 2px;
  background: #fff;
}

.side-group {
  padding: 10px 0 12px;
  border-bottom: 1px solid #cbcdd1;
}

.side-group-low {
  padding-top: 11px;
}

.side-group-last {
  border-bottom: none;
}

.side-title {
  height: 25px;
  line-height: 25px;
  margin-bottom: 5px;
  padding-left: 10px;
}

.tree-row {
  height: 25px;
  display: flex;
  align-items: center;
  padding-left: 14px;
  white-space: nowrap;
}

.tree-arrow {
  width: 12px;
  height: 12px;
  flex-shrink: 0;
  box-sizing: border-box;
  position: relative;
}

.arrow-down::before,
.arrow-right::before {
  content: "";
  position: absolute;
  border-style: solid;
  border-color: transparent;
}

.arrow-down::before {
  left: 1px;
  top: 3px;
  border-width: 6px 5px 0;
  border-top-color: #6e6e6e;
}

.arrow-right::before {
  left: 3px;
  top: 1px;
  border-width: 5px 0 5px 6px;
  border-left-color: #6e6e6e;
}

.tree-icon {
  width: 20px;
  height: 20px;
  margin: 0 5px 0 3px;
  color: #6e6e6e;
}

.tree-child {
  padding-left: 30px;
}

.tree-selected {
  background: #1a73e8;
  color: #fff;
}

.tree-selected .tree-icon {
  color: #fff;
}

.storage-pane {
  flex: 1;
  min-width: 0;
  display: flex;
  flex-direction: column;
}

.storage-toolbar {
  height: 34px;
  flex-shrink: 0;
  box-sizing: border-box;
  display: flex;
  align-items: center;
  background: #f1f3f4;
  border-bottom: 1px solid #cbcdd1;
}

.st-reload {
  width: 16px;
  height: 16px;
  margin-left: 13px;
}

.st-filter {
  width: 183px;
  height: 25px;
  margin-left: 11px;
  box-sizing: border-box;
  background: #fff;
  border: 1px solid #e2e4e7;
  padding-left: 5px;
  line-height: 27px;
  color: #75797f;
}

.st-sep {
  width: 1px;
  height: 20px;
  background: #cbcdd1;
  margin-left: 8px;
}

.st-block {
  width: 17px;
  height: 17px;
  margin-left: 15px;
}

.st-clear {
  width: 12px;
  height: 12px;
  margin-left: 20px;
}

.kv-table {
  height: 581px;
  flex-shrink: 0;
  display: flex;
  flex-direction: column;
  border-bottom: 1px solid #cbcdd1;
  box-sizing: border-box;
}

.kv-row {
  height: 25px;
  flex-shrink: 0;
  display: flex;
  line-height: 25px;
}

.kv-key {
  width: 171px;
  flex-shrink: 0;
  box-sizing: border-box;
  padding-left: 6px;
  border-right: 1px solid #cbcdd1;
  white-space: nowrap;
}

.kv-val {
  flex: 1;
  padding-left: 5px;
  white-space: nowrap;
  overflow: hidden;
}

.kv-head {
  height: 28px;
  line-height: 29px;
  background: #f1f3f4;
  border-bottom: 1px solid #cbcdd1;
  box-sizing: border-box;
}

.kv-head .kv-key,
.kv-head .kv-val {
  padding-top: 1px;
}

.kv-picked {
  height: 26px;
  background: #dadce0;
}

.kv-alt {
  background: #f1f3f4;
}

.kv-filler {
  flex: 1;
}

.viewer {
  height: 216px;
  flex-shrink: 0;
  display: flex;
  background: #fff;
}

.viewer-gutter {
  width: 51px;
  flex-shrink: 0;
  box-sizing: border-box;
  border-right: 1px solid #cbcdd1;
  text-align: right;
  padding: 6px 5px 0 0;
  color: #6f7478;
  font-size: 13px;
  line-height: 20px;
}

.viewer-code {
  flex: 1;
  padding: 6px 0 0 5px;
  font-size: 12.5px;
  line-height: 20px;
  color: #202124;
}

.viewer-scroll {
  width: 22px;
  flex-shrink: 0;
  background: #f1f1f1;
  display: flex;
  flex-direction: column;
  align-items: center;
}

.scroll-up {
  margin-top: 8px;
  width: 0;
  height: 0;
  border-left: 5px solid transparent;
  border-right: 5px solid transparent;
  border-bottom: 5px solid #a3a3a3;
}

.scroll-thumb {
  width: 17px;
  height: 169px;
  margin-top: 9px;
  background: #c1c1c1;
}

.scroll-down {
  margin-top: 10px;
  width: 0;
  height: 0;
  border-left: 5px solid transparent;
  border-right: 5px solid transparent;
  border-top: 5px solid #505050;
}

.status-bar {
  flex: 1;
  background: #dee1e6;
  border-top: 1px solid #cbcdd1;
}

/* windows taskbar */
.taskbar {
  flex: 1;
  display: flex;
  align-items: center;
  background: linear-gradient(90deg, #ecdcd6 0%, #efdfd5 50%, #e8dbdb 80%, #dcdce8 100%);
  border-top: 1px solid #e2d5d0;
  box-sizing: border-box;
}

.weather {
  width: 717px;
  flex-shrink: 0;
  display: flex;
  align-items: center;
  padding-left: 27px;
  box-sizing: border-box;
}

.weather-icon {
  width: 28px;
  height: 24px;
}

.weather-text {
  margin-left: 10px;
  margin-bottom: 2px;
  font-family: "Noto Sans", sans-serif;
  font-size: 14.3px;
  line-height: 21px;
}

.weather-temp {
  color: #1c1c1c;
}

.weather-desc {
  color: #5a5a5a;
}

.task-apps {
  display: flex;
  gap: 7px;
}

.task-app {
  width: 48px;
  height: 48px;
  display: flex;
  align-items: center;
  justify-content: center;
  position: relative;
  border-radius: 4px;
}

.task-icon {
  width: 30px;
  height: 30px;
}

.task-running::after {
  content: "";
  position: absolute;
  left: 20px;
  bottom: 2px;
  width: 8px;
  height: 4px;
  border-radius: 2px;
  background: #8c8584;
}

.task-active {
  background: #f5efeb;
}

.task-active::after {
  content: "";
  position: absolute;
  left: 14px;
  bottom: 1px;
  width: 20px;
  height: 4px;
  border-radius: 2px;
  background: #0bb294;
}

.tray {
  margin-left: auto;
  margin-right: 16px;
  display: flex;
  align-items: center;
}

.tray-chevron {
  width: 16px;
  height: 10px;
}

.tray-cloud {
  width: 22px;
  height: 22px;
  margin-left: 11px;
}

.tray-wifi {
  width: 22px;
  height: 18px;
  margin-left: 13px;
}

.tray-volume {
  width: 22px;
  height: 18px;
  margin-left: 6px;
}

.tray-battery {
  width: 22px;
  height: 18px;
  margin-left: 11px;
}

.clock {
  width: 121px;
  height: 48px;
  margin-left: 9px;
  box-sizing: border-box;
  background: rgba(255, 255, 255, 0.45);
  border-radius: 4px;
  display: flex;
  align-items: center;
  padding-right: 9px;
  font-family: "Noto Sans", sans-serif;
  font-size: 14px;
  line-height: 20px;
  color: #1c1c1c;
}

.clock-text {
  width: 77px;
  text-align: right;
  margin-bottom: 2px;
}

.notif-badge {
  width: 20px;
  height: 20px;
  margin-left: 15px;
  border-radius: 50%;
  background: #0bb294;
  color: #fff;
  text-align: center;
}
```
